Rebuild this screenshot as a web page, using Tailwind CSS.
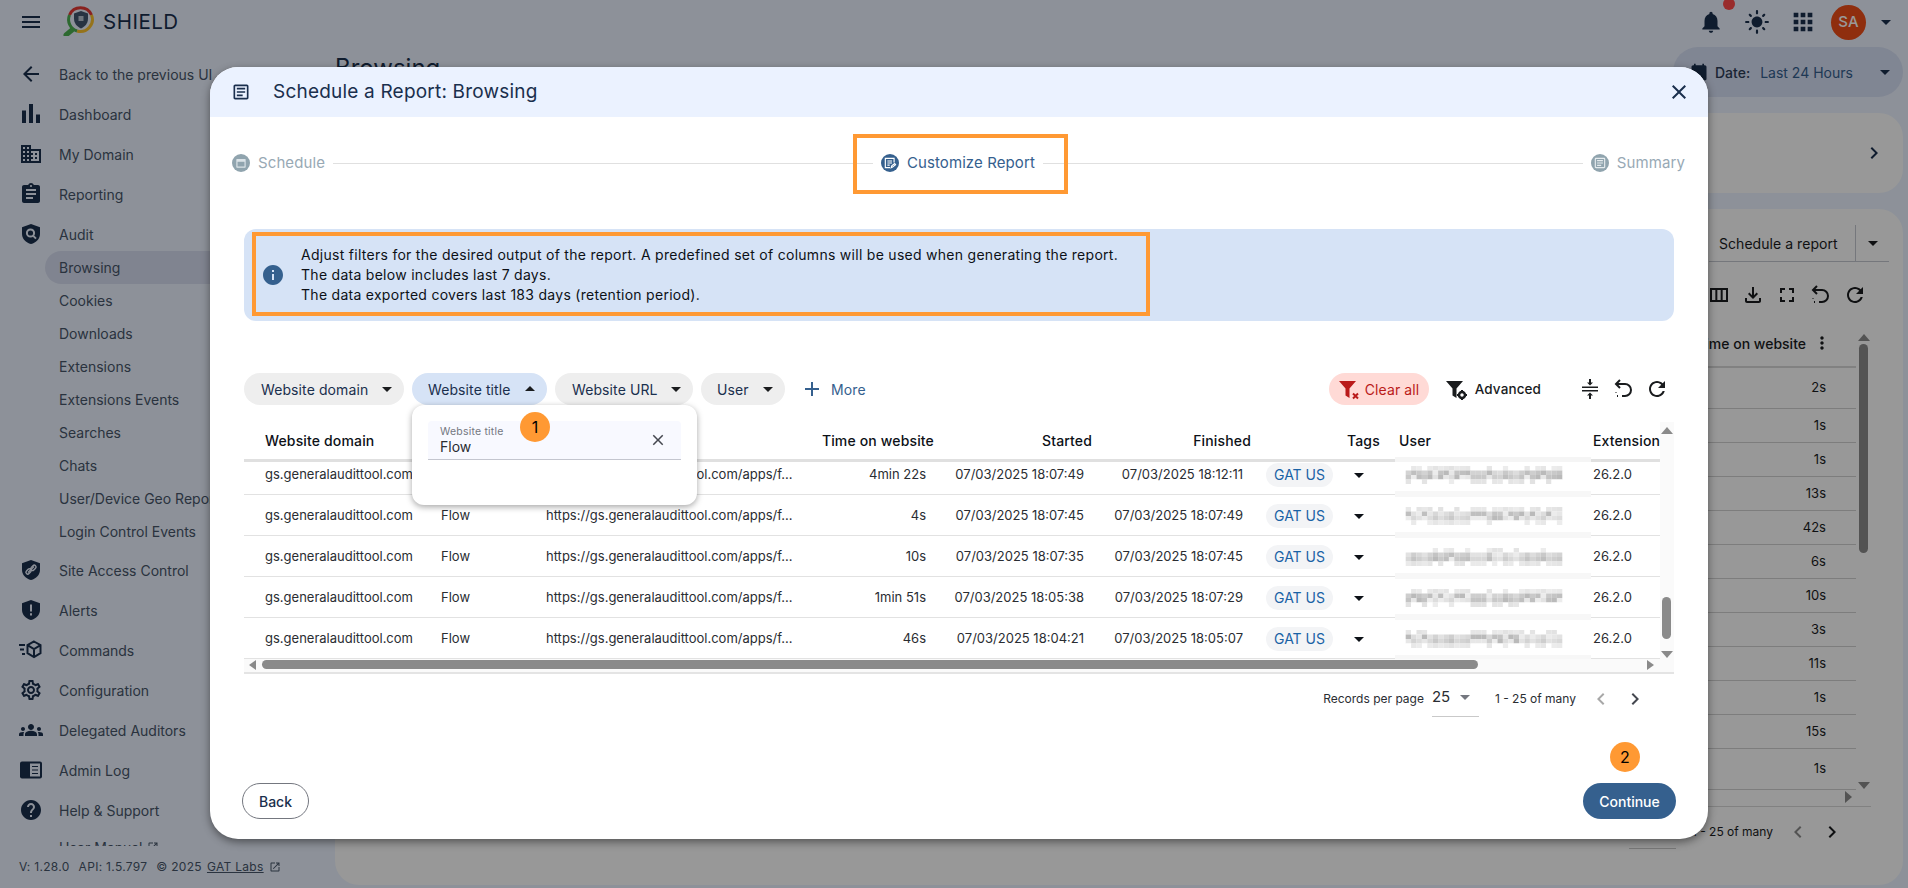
<!DOCTYPE html>
<html lang="en">
<head>
  <meta charset="UTF-8" />
  <title>Schedule a Report: Browsing</title>
  <script src="https://cdn.jsdelivr.net/npm/@tailwindcss/browser@4"></script>
</head>
<body class="font-['Inter','Liberation_Sans',sans-serif]">
<div class="relative w-[1908px] h-[888px] overflow-hidden bg-[#ebf2ff] text-[14px] text-[#475569]">

  <!-- Top bar -->
  <header class="h-[44px] flex items-center">
    <svg class="w-6 h-6 ml-[19px] text-[#1a2f4d]" viewBox="0 0 24 24" fill="currentColor"><path d="M3 18h18v-2H3v2zm0-5h18v-2H3v2zm0-7v2h18V6H3z"/></svg>
    <!-- logo -->
    <svg class="w-[32px] h-[32px] ml-[20px] mt-[-4px]" viewBox="0 0 32 32" fill="none">
      <path d="M9 26 L3 31" stroke="#4caf50" stroke-width="5" stroke-linecap="round"/>
      <path d="M6.5 11 A 12 12 0 0 1 28.5 11" stroke="#e53935" stroke-width="3"/>
      <path d="M28.5 11 A 12 12 0 0 1 14 27" stroke="#f9c02e" stroke-width="3"/>
      <path d="M14 27 A 12 12 0 0 1 6.5 11" stroke="#4caf50" stroke-width="3"/>
      <path d="M18 7 l7 2.5 v5 c0 5 -3 8 -7 10 c-4 -2 -7 -5 -7 -10 v-5z" fill="#41566e"/>
      <rect x="15.5" y="12" width="5" height="5" fill="#b8c4d0"/>
    </svg>
    <span class="ml-[8px] text-[20.5px] tracking-[0.5px] text-[#1a2f4d]">SHIELD</span>
    <div class="ml-auto flex items-center relative">
      <svg class="w-[26px] h-[26px] text-[#1a2f4d]" viewBox="0 0 24 24" fill="currentColor"><path d="M12 22c1.1 0 2-.9 2-2h-4c0 1.1.89 2 2 2zm6-6v-5c0-3.07-1.64-5.64-4.5-6.32V4c0-.83-.67-1.5-1.5-1.5s-1.5.67-1.5 1.5v.68C7.63 5.36 6 7.92 6 11v5l-2 2v1h16v-1l-2-2z"/></svg>
      <span class="absolute left-[25px] top-[-7px] w-3 h-3 rounded-full bg-[#ff4a4a]"></span>
      <svg class="w-[26px] h-[26px] ml-[20px] text-[#1a2f4d]" viewBox="0 0 24 24" fill="currentColor"><path d="M12 7c-2.76 0-5 2.24-5 5s2.24 5 5 5 5-2.24 5-5-2.24-5-5-5zM2 13h2c.55 0 1-.45 1-1s-.45-1-1-1H2c-.55 0-1 .45-1 1s.45 1 1 1zm18 0h2c.55 0 1-.45 1-1s-.45-1-1-1h-2c-.55 0-1 .45-1 1s.45 1 1 1zM11 2v2c0 .55.45 1 1 1s1-.45 1-1V2c0-.55-.45-1-1-1s-1 .45-1 1zm0 18v2c0 .55.45 1 1 1s1-.45 1-1v-2c0-.55-.45-1-1-1s-1 .45-1 1zM5.99 4.58c-.39-.39-1.03-.39-1.41 0-.39.39-.39 1.03 0 1.41l1.06 1.06c.39.39 1.03.39 1.41 0s.39-1.03 0-1.41L5.99 4.58zm12.37 12.37c-.39-.39-1.03-.39-1.41 0-.39.39-.39 1.03 0 1.41l1.06 1.06c.39.39 1.03.39 1.41 0 .39-.39.39-1.03 0-1.41l-1.06-1.06zm1.06-10.96c.39-.39.39-1.03 0-1.41-.39-.39-1.03-.39-1.41 0l-1.06 1.06c-.39.39-.39 1.03 0 1.41s1.03.39 1.41 0l1.06-1.06zM7.05 18.36c.39-.39.39-1.03 0-1.41-.39-.39-1.03-.39-1.41 0l-1.06 1.06c-.39.39-.39 1.03 0 1.41s1.03.39 1.41 0l1.06-1.06z"/></svg>
      <svg class="w-[28px] h-[28px] ml-[19px] text-[#1a2f4d]" viewBox="0 0 24 24" fill="currentColor"><path d="M4 8h4V4H4v4zm6 12h4v-4h-4v4zm-6 0h4v-4H4v4zm0-6h4v-4H4v4zm6 0h4v-4h-4v4zm6-10v4h4V4h-4zm-6 4h4V4h-4v4zm6 6h4v-4h-4v4zm0 6h4v-4h-4v4z"/></svg>
      <div class="w-[35px] h-[35px] ml-[14px] rounded-full bg-[#ee4d18] text-white text-[15px] font-medium flex items-center justify-center">SA</div>
      <svg class="w-6 h-6 ml-[8px] mr-[10px] text-[#1a2f4d]" viewBox="0 0 24 24" fill="currentColor"><path d="M7 10l5 5 5-5z"/></svg>
    </div>
  </header>

  <div class="flex h-[844px]">
    <!-- Sidebar -->
    <aside class="w-[335px] flex flex-col shrink-0">
      <nav class="h-[802px] overflow-hidden pt-[10px]">
        <a class="h-[40px] flex items-center pl-[19px]">
          <svg class="w-6 h-6 text-[#1a2f4d]" viewBox="0 0 24 24" fill="currentColor"><path d="M20 11H7.83l5.59-5.59L12 4l-8 8 8 8 1.41-1.41L7.83 13H20v-2z"/></svg>
          <span class="ml-[16px] whitespace-nowrap">Back to the previous UI</span>
        </a>
        <a class="h-[40px] flex items-center pl-[19px]">
          <svg class="w-6 h-6 text-[#1a2f4d]" viewBox="0 0 24 24" fill="currentColor"><path d="M3 8.500h4V21H3zM10 2h4v19h-4zm7 10.500h4V21h-4z"/></svg>
          <span class="ml-[16px]">Dashboard</span>
        </a>
        <a class="h-[40px] flex items-center pl-[19px]">
          <svg class="w-6 h-6 text-[#1a2f4d]" viewBox="0 0 24 24" fill="currentColor"><path d="M12 7V3H2v18h20V7H12zM6 19H4v-2h2v2zm0-4H4v-2h2v2zm0-4H4V9h2v2zm0-4H4V5h2v2zm4 12H8v-2h2v2zm0-4H8v-2h2v2zm0-4H8V9h2v2zm0-4H8V5h2v2zm10 12h-8v-2h2v-2h-2v-2h2v-2h-2V9h8v10zm-2-8h-2v2h2v-2zm0 4h-2v2h2v-2z"/></svg>
          <span class="ml-[16px]">My Domain</span>
        </a>
        <a class="h-[40px] flex items-center pl-[19px]">
          <svg class="w-6 h-6 text-[#1a2f4d]" viewBox="0 0 24 24" fill="currentColor"><path d="M19 3h-4.18C14.4 1.84 13.3 1 12 1c-1.3 0-2.4.84-2.82 2H5c-1.1 0-2 .9-2 2v14c0 1.1.9 2 2 2h14c1.1 0 2-.9 2-2V5c0-1.1-.9-2-2-2zm-7 0c.55 0 1 .45 1 1s-.45 1-1 1-1-.45-1-1 .45-1 1-1zm2 14H7v-2h7v2zm3-4H7v-2h10v2zm0-4H7V7h10v2z"/></svg>
          <span class="ml-[16px]">Reporting</span>
        </a>
        <a class="h-[40px] flex items-center pl-[19px]">
          <svg class="w-6 h-6 text-[#1a2f4d]" viewBox="0 0 24 24"><path fill="currentColor" d="M12 2 3 5.2v6.5c0 5.2 3.8 9 9 10.3 5.2-1.3 9-5.1 9-10.3V5.2z"/><circle cx="11.5" cy="11" r="3.6" fill="none" stroke="#ebf2ff" stroke-width="2"/><path d="M14 13.6l3 3" stroke="#ebf2ff" stroke-width="2"/></svg>
          <span class="ml-[16px]">Audit</span>
        </a>
        <div class="ml-[45px] h-[33px] flex items-center pl-[14px] -mt-[3px] rounded-l-full bg-[#d6dcf0]">Browsing</div>
        <a class="h-[33px] flex items-center pl-[59px]">Cookies</a>
        <a class="h-[33px] flex items-center pl-[59px]">Downloads</a>
        <a class="h-[33px] flex items-center pl-[59px]">Extensions</a>
        <a class="h-[33px] flex items-center pl-[59px]">Extensions Events</a>
        <a class="h-[33px] flex items-center pl-[59px]">Searches</a>
        <a class="h-[33px] flex items-center pl-[59px]">Chats</a>
        <a class="h-[33px] flex items-center pl-[59px] whitespace-nowrap">User/Device Geo Report</a>
        <a class="h-[33px] flex items-center pl-[59px]">Login Control Events</a>
        <a class="h-[40px] flex items-center pl-[19px] mt-[2px]">
          <svg class="w-6 h-6 text-[#1a2f4d]" viewBox="0 0 24 24"><path fill="currentColor" d="M12 2 3 5.2v6.5c0 5.2 3.8 9 9 10.3 5.2-1.3 9-5.1 9-10.3V5.2z"/><path d="M9 14.5l6-6" stroke="#ebf2ff" stroke-width="1.4"/><rect x="6.6" y="11.6" width="6" height="3.6" rx="1.8" transform="rotate(-45 9.6 13.4)" fill="none" stroke="#ebf2ff" stroke-width="1.4"/><rect x="11.4" y="8" width="6" height="3.6" rx="1.8" transform="rotate(-45 14.4 9.8)" fill="none" stroke="#ebf2ff" stroke-width="1.4"/></svg>
          <span class="ml-[16px]">Site Access Control</span>
        </a>
        <a class="h-[40px] flex items-center pl-[19px]">
          <svg class="w-6 h-6 text-[#1a2f4d]" viewBox="0 0 24 24"><path fill="currentColor" d="M12 2 3 5.2v6.5c0 5.2 3.8 9 9 10.3 5.2-1.3 9-5.1 9-10.3V5.2z"/><path fill="#ebf2ff" d="M11 6.5h2v7h-2zM11 15.2h2v2.2h-2z"/></svg>
          <span class="ml-[16px]">Alerts</span>
        </a>
        <a class="h-[40px] flex items-center pl-[19px]">
          <svg class="w-6 h-6 text-[#1a2f4d]" viewBox="0 0 24 24" fill="none" stroke="currentColor" stroke-width="2"><path d="M-1 7h7M1 11.5h4M3 16h3"/><path d="M15 3.5l6.5 3.7v8l-6.5 3.8-6.5-3.8v-8zM8.5 7.2l6.5 3.8 6.5-3.8M15 11v8"/></svg>
          <span class="ml-[16px]">Commands</span>
        </a>
        <a class="h-[40px] flex items-center pl-[19px]">
          <svg class="w-6 h-6 text-[#1a2f4d]" viewBox="0 0 24 24" fill="currentColor"><path d="M19.43 12.98c.04-.32.07-.64.07-.98 0-.34-.03-.66-.07-.98l2.11-1.65c.19-.15.24-.42.12-.64l-2-3.46c-.09-.16-.26-.25-.44-.25-.06 0-.12.01-.17.03l-2.49 1c-.52-.4-1.08-.73-1.69-.98l-.38-2.65C14.46 2.18 14.25 2 14 2h-4c-.25 0-.46.18-.49.42l-.38 2.65c-.61.25-1.17.59-1.69.98l-2.49-1c-.06-.02-.12-.03-.18-.03-.17 0-.34.09-.43.25l-2 3.46c-.13.22-.07.49.12.64l2.11 1.65c-.04.32-.07.65-.07.98 0 .33.03.66.07.98l-2.11 1.65c-.19.15-.24.42-.12.64l2 3.46c.09.16.26.25.44.25.06 0 .12-.01.17-.03l2.49-1c.52.4 1.08.73 1.69.98l.38 2.65c.03.24.24.42.49.42h4c.25 0 .46-.18.49-.42l.38-2.65c.61-.25 1.17-.59 1.69-.98l2.49 1c.06.02.12.03.18.03.17 0 .34-.09.43-.25l2-3.46c.12-.22.07-.49-.12-.64l-2.11-1.65zm-1.98-1.71c.04.31.05.52.05.73 0 .21-.02.43-.05.73l-.14 1.13.89.7 1.08.84-.7 1.21-1.27-.51-1.04-.42-.9.68c-.43.32-.84.56-1.25.73l-1.06.43-.16 1.13-.2 1.35h-1.4l-.19-1.35-.16-1.13-1.06-.43c-.43-.18-.83-.41-1.23-.71l-.91-.7-1.06.43-1.27.51-.7-1.21 1.08-.84.89-.7-.14-1.13c-.03-.31-.05-.54-.05-.74s.02-.43.05-.73l.14-1.13-.89-.7-1.08-.84.7-1.21 1.27.51 1.04.42.9-.68c.43-.32.84-.56 1.25-.73l1.06-.43.16-1.13.2-1.35h1.39l.19 1.35.16 1.13 1.06.43c.43.18.83.41 1.23.71l.91.7 1.06-.43 1.27-.51.7 1.21-1.07.85-.89.7.14 1.13zM12 8c-2.21 0-4 1.79-4 4s1.79 4 4 4 4-1.79 4-4-1.79-4-4-4zm0 6c-1.1 0-2-.9-2-2s.9-2 2-2 2 .9 2 2-.9 2-2 2z"/></svg>
          <span class="ml-[16px]">Configuration</span>
        </a>
        <a class="h-[40px] flex items-center pl-[19px]">
          <svg class="w-6 h-6 text-[#1a2f4d]" viewBox="0 0 24 24" fill="currentColor"><path d="M12 12.75c1.63 0 3.07.39 4.24.9 1.08.48 1.76 1.56 1.76 2.73V18H6v-1.61c0-1.18.68-2.26 1.76-2.73 1.17-.52 2.61-.91 4.24-.91zM4 13c1.1 0 2-.9 2-2s-.9-2-2-2-2 .9-2 2 .9 2 2 2zm1.13 1.1c-.37-.06-.74-.1-1.13-.1-.99 0-1.93.21-2.78.58C.48 14.9 0 15.62 0 16.43V18h4.5v-1.61c0-.83.23-1.61.63-2.29zM20 13c1.1 0 2-.9 2-2s-.9-2-2-2-2 .9-2 2 .9 2 2 2zm4 3.43c0-.81-.48-1.53-1.22-1.85-.85-.37-1.79-.58-2.78-.58-.39 0-.76.04-1.13.1.4.68.63 1.46.63 2.29V18H24v-1.57zM12 6c1.66 0 3 1.34 3 3s-1.34 3-3 3-3-1.34-3-3 1.34-3 3-3z"/></svg>
          <span class="ml-[16px]">Delegated Auditors</span>
        </a>
        <a class="h-[40px] flex items-center pl-[19px]">
          <svg class="w-6 h-6 text-[#1a2f4d]" viewBox="0 0 24 24"><rect x="1" y="3.5" width="22" height="17" rx="2" fill="currentColor"/><path fill="#ebf2ff" d="M11 5.5h10v13H11z"/><path d="M13 8.5h6M13 12h6M13 15.5h6" stroke="currentColor" stroke-width="1.2"/></svg>
          <span class="ml-[16px]">Admin Log</span>
        </a>
        <a class="h-[40px] flex items-center pl-[19px]">
          <svg class="w-6 h-6 text-[#1a2f4d]" viewBox="0 0 24 24" fill="currentColor"><path d="M12 2C6.48 2 2 6.48 2 12s4.48 10 10 10 10-4.48 10-10S17.52 2 12 2zm1 17h-2v-2h2v2zm2.07-7.75-.9.92C13.45 12.9 13 13.5 13 15h-2v-.5c0-1.1.45-2.1 1.17-2.83l1.24-1.26c.37-.36.59-.86.59-1.41 0-1.1-.9-2-2-2s-2 .9-2 2H8c0-2.21 1.79-4 4-4s4 1.79 4 4c0 .88-.36 1.68-.93 2.25z"/></svg>
          <span class="ml-[16px]">Help &amp; Support</span>
        </a>
        <a class="h-[33px] flex items-center pl-[59px] pt-[1px]">User Manual
          <svg class="w-3 h-3 ml-1" viewBox="0 0 24 24" fill="currentColor"><path d="M19 19H5V5h7V3H5c-1.11 0-2 .9-2 2v14c0 1.1.89 2 2 2h14c1.1 0 2-.9 2-2v-7h-2v7zM14 3v2h3.59l-9.83 9.83 1.41 1.41L19 6.41V10h2V3h-7z"/></svg>
        </a>
      </nav>
      <footer class="h-[42px] flex items-center pl-[19px] text-[12px] tracking-[0.3px] whitespace-nowrap">
        <span>V: 1.28.0</span><span class="ml-[9px]">API: 1.5.797</span><span class="ml-[9px]">© 2025</span>
        <span class="ml-[5px] underline">GAT Labs</span>
        <svg class="w-[12px] h-[12px] ml-[5px]" viewBox="0 0 24 24" fill="currentColor"><path d="M19 19H5V5h7V3H5c-1.11 0-2 .9-2 2v14c0 1.1.89 2 2 2h14c1.1 0 2-.9 2-2v-7h-2v7zM14 3v2h3.59l-9.83 9.83 1.41 1.41L19 6.41V10h2V3h-7z"/></svg>
      </footer>
    </aside>

    <!-- Main behind the dialog -->
    <main class="flex-1 pr-[5px] flex flex-col">
      <div class="h-[69px] flex items-start justify-between">
        <h1 class="text-[24px] mt-[6px] text-[#1a2f4d]">Browsing</h1>
        <div class="w-[230px] h-[50px] mt-[3px] rounded-full bg-[#d6dff5] flex items-center pl-[16px]">
          <svg class="w-5 h-5 text-[#1a2f4d]" viewBox="0 0 24 24" fill="currentColor"><path d="M19 4h-1V2h-2v2H8V2H6v2H5c-1.1 0-2 .9-2 2v14c0 1.1.9 2 2 2h14c1.1 0 2-.9 2-2V6c0-1.1-.9-2-2-2z"/></svg>
          <span class="ml-[6px] font-medium text-[#2d3d55]">Date:</span>
          <span class="ml-[10px] text-[#35608e]">Last 24 Hours</span>
          <svg class="w-6 h-6 ml-[20px] text-[#1a2f4d]" viewBox="0 0 24 24" fill="currentColor"><path d="M7 10l5 5 5-5z"/></svg>
        </div>
      </div>
      <section class="h-[80px] rounded-[24px] bg-[#fdfdfd] flex items-center justify-end pr-[17px]">
        <svg class="w-6 h-6 text-[#1a2f4d]" viewBox="0 0 24 24" fill="currentColor"><path d="M10 6 8.59 7.41 13.17 12l-4.58 4.58L10 18l6-6z"/></svg>
      </section>
      <section class="mt-[16px] h-[676px] rounded-[24px] bg-[#fdfdfd] flex flex-col items-end pt-[16px] pr-[16px] text-[#1a1c1e]">
        <div class="flex items-center h-[37px] border-b border-[#c4c6cf] w-[180px] -mr-[2px]">
          <span class="ml-[10px] whitespace-nowrap text-[14px] tracking-[0.05px]">Schedule a report</span>
          <span class="ml-auto h-full border-l border-[#c4c6cf] flex items-center pl-[5px] pr-[4px]">
            <svg class="w-6 h-6" viewBox="0 0 24 24" fill="currentColor"><path d="M7 10l5 5 5-5z"/></svg>
          </span>
        </div>
        <div class="flex items-center gap-[10px] mt-[21px] mr-[20px] h-6">
          <svg class="w-6 h-6" viewBox="0 0 24 24" fill="currentColor"><path d="M3 5v14h18V5H3zm5.33 12H5V7h3.33v10zm5.34 0h-3.33V7h3.33v10zM19 17h-3.33V7H19v10z"/></svg>
          <svg class="w-6 h-6" viewBox="0 0 24 24" fill="currentColor"><path d="M18 15v3H6v-3H4v3c0 1.1.9 2 2 2h12c1.1 0 2-.9 2-2v-3h-2zm-1-4-1.41-1.41L13 12.17V4h-2v8.17L8.41 9.59 7 11l5 5 5-5z"/></svg>
          <svg class="w-6 h-6" viewBox="0 0 24 24" fill="currentColor"><path d="M7 14H5v5h5v-2H7v-3zm-2-4h2V7h3V5H5v5zm12 7h-3v2h5v-5h-2v3zM14 5v2h3v3h2V5h-5z"/></svg>
          <svg class="w-6 h-6" viewBox="0 0 24 24" fill="none" stroke="currentColor" stroke-width="2"><path d="M8 3 4 7l4 4M4 7h9a6 6 0 0 1 0 12h-3M6 19H5M4 15.500v.5"/></svg>
          <svg class="w-6 h-6" viewBox="0 0 24 24" fill="currentColor"><path d="M17.65 6.35C16.2 4.9 14.21 4 12 4c-4.42 0-7.99 3.58-7.99 8s3.57 8 7.99 8c3.73 0 6.84-2.55 7.73-6h-2.08c-.82 2.33-3.04 4-5.65 4-3.31 0-6-2.69-6-6s2.69-6 6-6c1.66 0 3.14.69 4.22 1.78L13 11h7V4l-2.35 2.35z"/></svg>
        </div>
        <!-- table behind the dialog -->
        <div class="relative mt-[27px] mr-[16px] w-[200px] h-[472px] overflow-hidden">
          <div class="h-[32px] pb-[14px] pr-[39px] flex items-center justify-end whitespace-nowrap font-medium text-[14px]">
            Time on website
            <svg class="w-5 h-5 ml-[6px]" viewBox="0 0 24 24" fill="currentColor"><path d="M12 8c1.1 0 2-.9 2-2s-.9-2-2-2-2 .9-2 2 .9 2 2 2zm0 2c-1.1 0-2 .9-2 2s.9 2 2 2 2-.9 2-2-.9-2-2-2zm0 6c-1.1 0-2 .9-2 2s.9 2 2 2 2-.9 2-2-.9-2-2-2z"/></svg>
          </div>
          <div id="bgRows" class="border-t-[2px] border-[#d8d8d8] mr-[15px] text-[13px]"></div>
          <div class="absolute right-[3px] top-[10px] w-[9px] h-[209px] rounded-full bg-[#8a8a8a]"></div>
          <div class="absolute right-[1px] top-0 w-0 h-0 border-x-[6px] border-x-transparent border-b-[7px] border-b-[#8a8a8a]"></div>
          <div class="absolute right-[1px] top-[448px] w-0 h-0 border-x-[6px] border-x-transparent border-t-[7px] border-t-[#8a8a8a]"></div>
          <div class="absolute right-[19px] top-[457px] w-0 h-0 border-y-[6px] border-y-transparent border-l-[7px] border-l-[#8a8a8a]"></div>
        </div>
        <div class="mr-[16px] w-[260px] h-[50px] border-t border-[#d8d8d8] flex items-center justify-end pr-[27px] text-[13px] whitespace-nowrap">
          <span class="shrink-0 w-[47px] h-[38px] mt-[-3px] mr-[16px] border-b border-[#c9c9c9]"></span>
          <span class="text-[12px]">1 - 25 of many</span>
          <svg class="shrink-0 w-6 h-6 ml-[13px] text-[#8a8a8a]" viewBox="0 0 24 24" fill="currentColor"><path d="M15.41 7.41 14 6l-6 6 6 6 1.41-1.41L10.83 12z"/></svg>
          <svg class="shrink-0 w-6 h-6 ml-[10px]" viewBox="0 0 24 24" fill="currentColor"><path d="M10 6 8.59 7.41 13.17 12l-4.58 4.58L10 18l6-6z"/></svg>
        </div>
      </section>
    </main>
  </div>

  <!-- Scrim -->
  <div class="absolute inset-0 bg-black/40"></div>

  <!-- Dialog -->
  <div class="absolute left-[210px] top-[67px] w-[1498px] h-[772px] rounded-[28px] bg-white overflow-hidden flex flex-col shadow-[0_3px_8px_rgba(0,0,0,0.45)] text-[#1a1c1e]">
    <div class="h-[50px] shrink-0 bg-[#ebf2ff] flex items-center pl-[21px] pr-[17px] text-[#1a2f4d]">
      <svg class="w-5 h-5" viewBox="0 0 24 24" fill="currentColor"><path d="M19 5v14H5V5h14m0-2H5c-1.1 0-2 .9-2 2v14c0 1.1.9 2 2 2h14c1.1 0 2-.9 2-2V5c0-1.1-.9-2-2-2z"/><path d="M14 17H7v-2h7v2zm3-4H7v-2h10v2zm0-4H7V7h10v2z"/></svg>
      <span class="ml-[22px] text-[19px] tracking-[0.2px]">Schedule a Report: Browsing</span>
      <svg class="w-6 h-6 ml-auto" viewBox="0 0 24 24" fill="currentColor"><path d="M19 6.41 17.59 5 12 10.59 6.41 5 5 6.41 10.59 12 5 17.59 6.41 19 12 13.41 17.59 19 19 17.59 13.41 12z"/></svg>
    </div>

    <!-- Stepper -->
    <div class="h-[92px] shrink-0 flex items-center pl-[22px] pr-[23px] gap-[8px]">
      <span class="w-[18px] h-[18px] rounded-full bg-[#90a4ae] flex items-center justify-center">
        <svg class="w-[14px] h-[14px] text-[#dbe3e8]" viewBox="0 0 24 24" fill="currentColor"><path d="M5 5h14a1 1 0 0 1 1 1v13a1 1 0 0 1-1 1H5a1 1 0 0 1-1-1V6a1 1 0 0 1 1-1zm1 5v8h12v-8z"/></svg>
      </span>
      <span class="text-[#98a9b5] text-[15px] tracking-[0.1px]">Schedule</span>
      <span class="flex-1 h-px bg-[#e0e0e0]"></span>
      <span class="w-[18px] h-[18px] rounded-full bg-[#35608e] flex items-center justify-center">
        <svg class="w-[14px] h-[14px] text-white" viewBox="0 0 24 24" fill="none" stroke="currentColor" stroke-width="2"><path d="M19 11V4H4v16h8M7.500 8.500h8M7.500 12h8M7.500 15.500h4M14 20l1-3 5-4 1.500 2-5 4z"/></svg>
      </span>
      <span class="text-[#35608e] text-[15px] tracking-[0.1px]">Customize Report</span>
      <span class="flex-1 h-px bg-[#e0e0e0]"></span>
      <span class="w-[18px] h-[18px] rounded-full bg-[#90a4ae] flex items-center justify-center">
        <svg class="w-[14px] h-[14px] text-[#e5ebee]" viewBox="0 0 24 24" fill="currentColor"><path d="M19 5v14H5V5h14m0-2H5c-1.1 0-2 .9-2 2v14c0 1.1.9 2 2 2h14c1.1 0 2-.9 2-2V5c0-1.1-.9-2-2-2z"/><path d="M14 17H7v-2h7v2zm3-4H7v-2h10v2zm0-4H7V7h10v2z"/></svg>
      </span>
      <span class="text-[#98a9b5] text-[15px] tracking-[0.1px]">Summary</span>
    </div>

    <div class="px-[34px] flex-1 flex flex-col min-h-0">
      <!-- Info banner -->
      <div class="mt-[20px] h-[92px] shrink-0 rounded-[12px] bg-[#d6e3f6] flex items-center pl-[17px]">
        <svg class="w-6 h-6 shrink-0" viewBox="0 0 24 24" fill="#35608e"><path d="M12 2C6.480 2 2 6.480 2 12s4.480 10 10 10 10-4.480 10-10S17.520 2 12 2zm1 15h-2v-6h2v6zm0-8h-2V7h2v2z"/></svg>
        <div class="ml-[16px] text-[14px] leading-[20px] tracking-[0.28px] text-[#0d1117]">
          <p>Adjust filters for the desired output of the report. A predefined set of columns will be used when generating the report.</p>
          <p>The data below includes last 7 days.</p>
          <p>The data exported covers last 183 days (retention period).</p>
        </div>
      </div>

      <!-- Filters -->
      <div class="mt-[52px] h-[32px] shrink-0 flex items-center text-[14px] tracking-[0.1px] text-[#1a2f4d]">
        <button class="w-[160px] h-[32px] rounded-full bg-[#eeeeee] flex items-center pl-[17px]">Website domain
          <svg class="w-6 h-6 ml-auto mr-[5px]" viewBox="0 0 24 24" fill="#1a1c1e"><path d="M7 10l5 5 5-5z"/></svg></button>
        <button class="ml-[8px] w-[135px] h-[32px] rounded-full bg-[#d6e3f6] flex items-center pl-[16px]">Website title
          <svg class="w-6 h-6 ml-auto mr-[5px]" viewBox="0 0 24 24" fill="#1a1c1e"><path d="M7 14l5-5 5 5z"/></svg></button>
        <button class="ml-[8px] w-[138px] h-[32px] rounded-full bg-[#eeeeee] flex items-center pl-[17px]">Website URL
          <svg class="w-6 h-6 ml-auto mr-[5px]" viewBox="0 0 24 24" fill="#1a1c1e"><path d="M7 10l5 5 5-5z"/></svg></button>
        <button class="ml-[8px] w-[84px] h-[32px] rounded-full bg-[#eeeeee] flex items-center pl-[16px]">User
          <svg class="w-6 h-6 ml-auto mr-[5px]" viewBox="0 0 24 24" fill="#1a1c1e"><path d="M7 10l5 5 5-5z"/></svg></button>
        <button class="ml-[15px] flex items-center text-[#35608e]">
          <svg class="w-6 h-6" viewBox="0 0 24 24" fill="currentColor"><path d="M19 13h-6v6h-2v-6H5v-2h6V5h2v6h6v2z"/></svg>
          <span class="ml-[7px]">More</span></button>
        <button class="ml-auto w-[100px] h-[32px] rounded-full bg-[#ffdad6] flex items-center pl-[8px] text-[#ba1a1a]">
          <svg class="w-6 h-6" viewBox="0 0 24 24" fill="currentColor"><path d="M2 4h17l-6.500 7.500v9.500l-4-2.500v-7z"/><path d="M16 16.500l5 5m0-5l-5 5" stroke="currentColor" stroke-width="2"/></svg>
          <span class="ml-[4px]">Clear all</span></button>
        <button class="ml-[15px] flex items-center text-[#1a1c1e]">
          <svg class="w-6 h-6" viewBox="0 0 24 24" fill="currentColor"><path d="M2 4h17l-6.500 7.500v9.500l-4-2.500v-7z"/><circle cx="18" cy="18" r="3" fill="none" stroke="currentColor" stroke-width="2.500"/><path d="M18 13v2M18 21v2M13 18h2M21 18h2" stroke="currentColor" stroke-width="2"/></svg>
          <span class="ml-[7px] font-medium text-[13.500px]">Advanced</span></button>
        <div class="ml-[37px] mr-[5px] flex items-center gap-[9.500px] text-[#1a1c1e]">
          <svg class="w-6 h-6" viewBox="0 0 24 24" fill="currentColor"><path d="M4 9.500h16V11H4zM4 13h16v1.500H4zM12 8.500 9 5.500h2V2h2v3.500h2zM12 15.500l3 3h-2V22h-2v-3.500H9z"/></svg>
          <svg class="w-6 h-6" viewBox="0 0 24 24" fill="none" stroke="currentColor" stroke-width="2"><path d="M8 3 4 7l4 4M4 7h9a6 6 0 0 1 0 12h-3M6 19H5M4 15.500v.5"/></svg>
          <svg class="w-6 h-6" viewBox="0 0 24 24" fill="currentColor"><path d="M17.650 6.350C16.200 4.900 14.210 4 12 4c-4.420 0-7.990 3.580-7.990 8s3.570 8 7.990 8c3.730 0 6.840-2.550 7.730-6h-2.080c-.82 2.330-3.040 4-5.650 4-3.310 0-6-2.690-6-6s2.690-6 6-6c1.660 0 3.140.69 4.220 1.780L13 11h7V4l-2.350 2.350z"/></svg>
        </div>
      </div>

      <!-- Data table -->
      <div class="relative mt-[17px] h-[252px] shrink-0 border-b-[2px] border-[#e4e4e4]">
        <div class="mr-[14px]">
          <div class="grid grid-cols-[176px_105px_260px_128px_158px_159px_96px_52px_194px_67px] h-[40px] items-center border-b-[3px] border-[#e0e0e0] pl-[21px] text-[14px] font-medium tracking-[0.15px] text-[#0d1117]">
            <span class="whitespace-nowrap">Website domain</span>
            <span></span><span></span>
            <span class="text-right whitespace-nowrap">Time on website</span>
            <span class="text-right">Started</span>
            <span class="text-right">Finished</span>
            <span></span>
            <span>Tags</span>
            <span class="relative self-stretch flex items-center">User<span class="absolute -left-[4px] -bottom-[3px] w-[196px] h-[5px] bg-[#f5f5f5]"></span></span>
            <span class="overflow-hidden whitespace-nowrap">Extension</span>
          </div>
          <div id="rows" class="h-[198px] overflow-hidden text-[13px]"></div>
        </div>
        <!-- scrollbars -->
        <div class="absolute right-0 top-0 bottom-[13px] w-[14px] bg-[#fafafa]">
          <div class="absolute left-[1px] top-[5px] w-0 h-0 border-x-[6px] border-x-transparent border-b-[7px] border-b-[#8a8a8a]"></div>
          <div class="absolute left-[2px] top-[175px] w-[9px] h-[42px] rounded-full bg-[#8a8a8a]"></div>
          <div class="absolute left-[1px] bottom-[1px] w-0 h-0 border-x-[6px] border-x-transparent border-t-[7px] border-t-[#8a8a8a]"></div>
        </div>
        <div class="absolute left-0 right-0 bottom-0 h-[13px] bg-[#fafafa]">
          <div class="absolute left-[5px] top-[1px] w-0 h-0 border-y-[5px] border-y-transparent border-r-[7px] border-r-[#8a8a8a]"></div>
          <div class="absolute left-[18px] top-[1px] w-[1216px] h-[9px] rounded-full bg-[#8a8a8a]"></div>
          <div class="absolute right-[20px] top-[1px] w-0 h-0 border-y-[5px] border-y-transparent border-l-[7px] border-l-[#8a8a8a]"></div>
        </div>
      </div>

      <!-- Pagination -->
      <div class="h-[50px] shrink-0 flex items-center justify-end pr-[27px] text-[12px] text-[#2a2d32]">
        <span>Records per page</span>
        <span class="ml-[8px] w-[47px] h-[38px] mt-[-3px] flex items-center text-[15px] border-b border-[#c9c9c9]">25
          <svg class="w-6 h-6 ml-[3px] text-[#74777f]" viewBox="0 0 24 24" fill="currentColor"><path d="M7 10l5 5 5-5z"/></svg></span>
        <span class="ml-[16px]">1 - 25 of many</span>
        <svg class="w-6 h-6 ml-[13px] text-[#a8a8a8]" viewBox="0 0 24 24" fill="currentColor"><path d="M15.410 7.410 14 6l-6 6 6 6 1.410-1.410L10.830 12z"/></svg>
        <svg class="w-6 h-6 ml-[10px] text-[#44474f]" viewBox="0 0 24 24" fill="currentColor"><path d="M10 6 8.590 7.410 13.170 12l-4.580 4.580L10 18l6-6z"/></svg>
      </div>

      <!-- Actions -->
      <div class="mt-auto mb-[20px] flex items-center justify-between -mx-[2px] font-medium text-[14px]">
        <button class="w-[67px] h-[36px] rounded-full border border-[#74777f] text-[#1a2f4d]">Back</button>
        <button class="w-[93px] h-[36px] rounded-full bg-[#35608e] text-white">Continue</button>
      </div>
    </div>

    <!-- Filter popover -->
    <div class="absolute left-[202px] top-[338px] w-[285px] h-[100px] rounded-[12px] bg-white shadow-[0_2px_6px_rgba(0,0,0,0.35)] p-[16px]">
      <div class="relative h-[39px] rounded-t-[4px] bg-[#f8f9ff] border-b border-[#c4c6cf] pl-[12px] pt-[5px]">
        <div class="text-[10.500px] leading-[12px] text-[#74777f] tracking-[0.2px]">Website title</div>
        <div class="text-[14px] leading-[17px] text-[#2a2d32]">Flow</div>
        <svg class="absolute right-[14px] top-[10px] w-[18px] h-[18px] text-[#44474f]" viewBox="0 0 24 24" fill="currentColor"><path d="M19 6.410 17.590 5 12 10.590 6.410 5 5 6.410 10.590 12 5 17.590 6.410 19 12 13.410 17.590 19 19 17.590 13.410 12z"/></svg>
      </div>
    </div>

    <!-- Annotation overlays -->
    <div class="absolute left-[643px] top-[67px] w-[215px] h-[60px] border-[4px] border-[#ff9933]"></div>
    <div class="absolute left-[42px] top-[165px] w-[898px] h-[84px] border-[4px] border-[#ff9933]"></div>
    <div class="absolute left-[310px] top-[345px] w-[30px] h-[30px] rounded-full bg-[#ff9933] flex items-center justify-center text-[16px] text-black">1</div>
    <div class="absolute left-[1400px] top-[675px] w-[30px] h-[30px] rounded-full bg-[#ff9933] flex items-center justify-center text-[16px] text-black">2</div>
  </div>
</div>

<script>
  // Rows of the dialog table
  const data = [
    ['4min 22s', '07/03/2025 18:07:49', '07/03/2025 18:12:11'],
    ['4s', '07/03/2025 18:07:45', '07/03/2025 18:07:49'],
    ['10s', '07/03/2025 18:07:35', '07/03/2025 18:07:45'],
    ['1min 51s', '07/03/2025 18:05:38', '07/03/2025 18:07:29'],
    ['46s', '07/03/2025 18:04:21', '07/03/2025 18:05:07'],
  ];

  // Blurred e-mail address, drawn as a mosaic
  function mosaic(seed) {
    let s = '';
    [0, 5, 10, 15].forEach((y, r) => {
      const mid = r === 1 || r === 2;
      for (let i = 0; i < 29; i++) {
        const n = (i * 37 + r * 53 + seed * 7 + (i * i * 3) % 17) % 11;
        let g = mid ? 186 + n * 5 : 226 + n * 2;
        if (!mid && n > 5) g = 255;
        s += `<rect x="${i * 6}" y="${y}" width="6" height="5" fill="rgb(${g},${g},${g})"/>`;
      }
    });
    return `<svg width="170" height="18" viewBox="0 0 174 20">${s}</svg>`;
  }

  document.getElementById('rows').innerHTML = '<div class="-mt-[8px]">' + data.map((d, i) => `
    <div class="grid grid-cols-[176px_105px_260px_128px_158px_159px_96px_52px_194px_67px] h-[41px] pt-[1px] items-center border-b-[1.500px] border-[#e2e2e2] pl-[21px] text-[#2a2d32] whitespace-nowrap">
      <span>gs.generalaudittool.com</span>
      <span>Flow</span>
      <span>https://gs.generalaudittool.com/apps/f...</span>
      <span class="text-right pr-[8px]">${d[0]}</span>
      <span class="text-right pr-[8px]">${d[1]}</span>
      <span class="text-right pr-[8px]">${d[2]}</span>
      <span class="pl-[15px]"><span class="inline-flex items-center justify-center w-[67px] h-[24px] rounded-full bg-[#f3f4f6] text-[14px] text-[#1a62a5]">GAT US</span></span>
      <span><svg class="w-6 h-6" viewBox="0 0 24 24" fill="#0d1117"><path d="M7 10l5 5 5-5z"/></svg></span>
      <span class="relative self-stretch flex items-center">${mosaic(i + 1)}<span class="absolute -left-[4px] -bottom-[3px] w-[196px] h-[6px] bg-[#f7f7f7]"></span></span>
      <span>26.2.0</span>
    </div>`).join('') + '</div>';

  // Rows of the table behind the dialog
  const times = ['2s', '1s', '1s', '13s', '42s', '6s', '10s', '3s', '11s', '1s', '15s', '1s'];
  document.getElementById('bgRows').innerHTML = times.map((t, i) =>
    i === 0 || i === times.length - 1
      ? `<div class="h-[41px] pr-[30px] flex items-center justify-end border-b border-[#d0d0d0]">${t}</div>`
      : `<div class="h-[34px] pr-[30px] flex items-center justify-end border-b border-[#d0d0d0]">${t}</div>`
  ).join('');
</script>
</body>
</html>
